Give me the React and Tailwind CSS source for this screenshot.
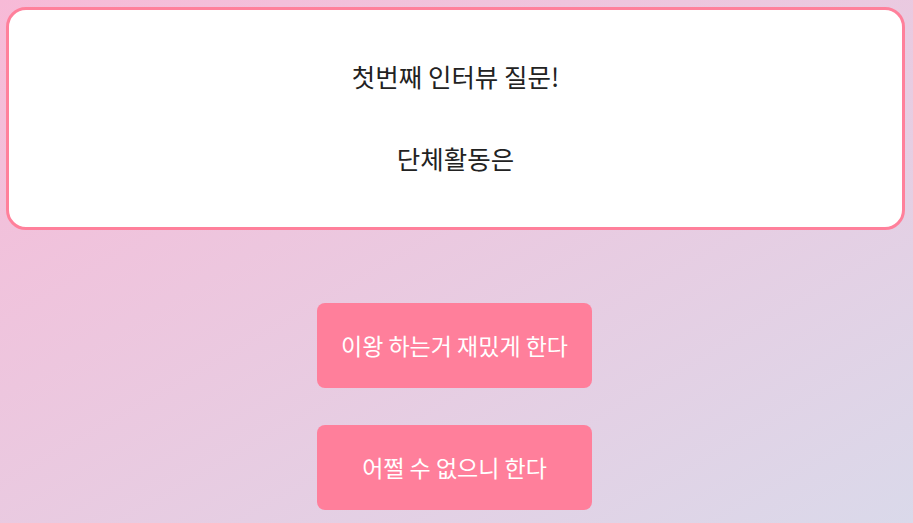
export default function App() {
  return (
    <div
      className="w-full h-[523px] overflow-hidden bg-gradient-to-br from-[#f7bad7] to-[#dad9ea] pt-[7px] pl-[6px] pr-[8px]"
      style={{ fontFamily: '"Noto Sans CJK KR", "Noto Sans", sans-serif' }}
    >
      {/* Question card */}
      <div className="h-[223px] bg-white border-[3px] border-[#ff809b] rounded-[20px] flex flex-col items-center justify-center gap-[47px] pb-[4px] text-[#222222] text-[25.5px]">
        <p className="leading-[35px]">첫번째 인터뷰 질문!</p>
        <p className="leading-[35px]">단체활동은</p>
      </div>

      {/* Answers */}
      <div className="flex flex-col items-center gap-[37px] mt-[73px] pr-[2px]">
        <button className="w-[275px] h-[85px] rounded-[8px] bg-[#ff7f9b] text-white text-[23px]">
          이왕 하는거 재밌게 한다
        </button>
        <button className="w-[275px] h-[85px] rounded-[8px] bg-[#ff7f9b] text-white text-[23px]">
          어쩔 수 없으니 한다
        </button>
      </div>
    </div>
  );
}
